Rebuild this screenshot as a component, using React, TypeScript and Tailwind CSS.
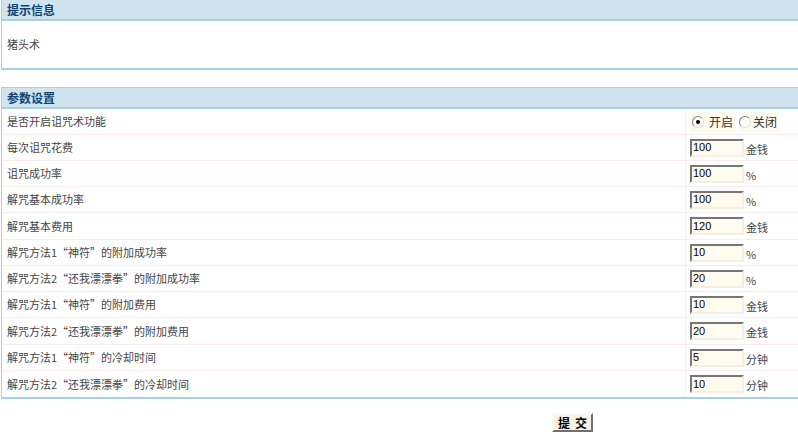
import type { ReactNode } from "react";

type Row = { label: string; value?: string; unit?: string; radio?: boolean };

const rows: Row[] = [
  { label: "是否开启诅咒术功能", radio: true },
  { label: "每次诅咒花费", value: "100", unit: "金钱" },
  { label: "诅咒成功率", value: "100", unit: "%" },
  { label: "解咒基本成功率", value: "100", unit: "%" },
  { label: "解咒基本费用", value: "120", unit: "金钱" },
  { label: "解咒方法1“神符”的附加成功率", value: "10", unit: "%" },
  { label: "解咒方法2“还我漂漂拳”的附加成功率", value: "20", unit: "%" },
  { label: "解咒方法1“神符”的附加费用", value: "10", unit: "金钱" },
  { label: "解咒方法2“还我漂漂拳”的附加费用", value: "20", unit: "金钱" },
  { label: "解咒方法1“神符”的冷却时间", value: "5", unit: "分钟" },
  { label: "解咒方法2“还我漂漂拳”的冷却时间", value: "10", unit: "分钟" },
];

const cjk = "font-['Noto_Sans_CJK_SC','Liberation_Sans',sans-serif]";

function Panel({ title, children, top }: { title: string; children: ReactNode; top?: boolean }) {
  return (
    <div
      className={`ml-px border-l border-b-2 border-[#a9cfe2] ${top ? "" : "border-t border-t-[#a9cfe2]"}`}
    >
      <div className="flex h-[21px] items-center border-b-2 border-[#a9cfe2] bg-[#cfe4ef] pl-[5px]">
        <span className={`${cjk} text-[12px] font-bold leading-none text-[#0f4374]`}>{title}</span>
      </div>
      {children}
    </div>
  );
}

function Radio({ checked }: { checked?: boolean }) {
  return (
    <span className="flex h-[12px] w-[12px] items-center justify-center rounded-full border border-t-[#808080] border-l-[#808080] border-r-[#e0e0e0] border-b-[#e0e0e0] bg-white">
      {checked && <span className="h-[4px] w-[4px] rounded-full bg-black" />}
    </span>
  );
}

function ValueInput({ value }: { value: string }) {
  return (
    <div className="flex h-[18px] w-[54px] items-center border-2 border-t-[#767676] border-l-[#767676] border-r-[#f2efe4] border-b-[#f2efe4] bg-[#fffcef] pl-px">
      <span className="font-['Liberation_Sans',sans-serif] text-[11px] leading-none text-black">{value}</span>
    </div>
  );
}

export default function App() {
  return (
    <div className={`h-[447px] w-[798px] overflow-hidden bg-white ${cjk} text-[11px] text-[#444]`}>
      <Panel title="提示信息" top>
        <div className="flex h-[47px] items-center pl-[5px]">猪头术</div>
      </Panel>

      <div className="mt-[17px]">
        <Panel title="参数设置">
          {rows.map((r, i) => (
            <div
              key={r.label}
              className={`flex items-center ${i === 4 || i === 8 ? "h-[27px]" : "h-[26px]"} ${
                i < rows.length - 1 ? "border-b border-[#fcebeb]" : ""
              }`}
            >
              <div className="flex h-full w-[684px] items-center border-r border-[#fcebeb] pl-[5px]">
                {r.label}
              </div>
              <div className="flex h-full items-center pl-[4px]">
                {r.radio ? (
                  <div className="flex items-center gap-[4px] text-[12px] text-[#333]">
                    <span className="flex h-[20px] items-center gap-[5px] bg-[#fdfbee] px-[2px]">
                      <Radio checked />
                      开启
                    </span>
                    <span className="flex h-[20px] items-center gap-[2px] bg-[#fdfbee] pr-[2px]">
                      <Radio />
                      关闭
                    </span>
                  </div>
                ) : (
                  <>
                    <ValueInput value={r.value ?? ""} />
                    <span className="ml-[2px] mt-[3px] text-[11px] text-[#444]">{r.unit}</span>
                  </>
                )}
              </div>
            </div>
          ))}
        </Panel>
      </div>

      <div className="mt-[14px] pl-[552px]">
        <button className="flex h-[19px] w-[41px] items-center justify-center gap-[5px] border-2 border-t-[#fafafa] border-l-[#fafafa] border-r-[#6f6f6f] border-b-[#6f6f6f] bg-[#f6f3e3] text-[12px] font-bold leading-none text-black">
          <span>提</span>
          <span>交</span>
        </button>
      </div>
    </div>
  );
}
